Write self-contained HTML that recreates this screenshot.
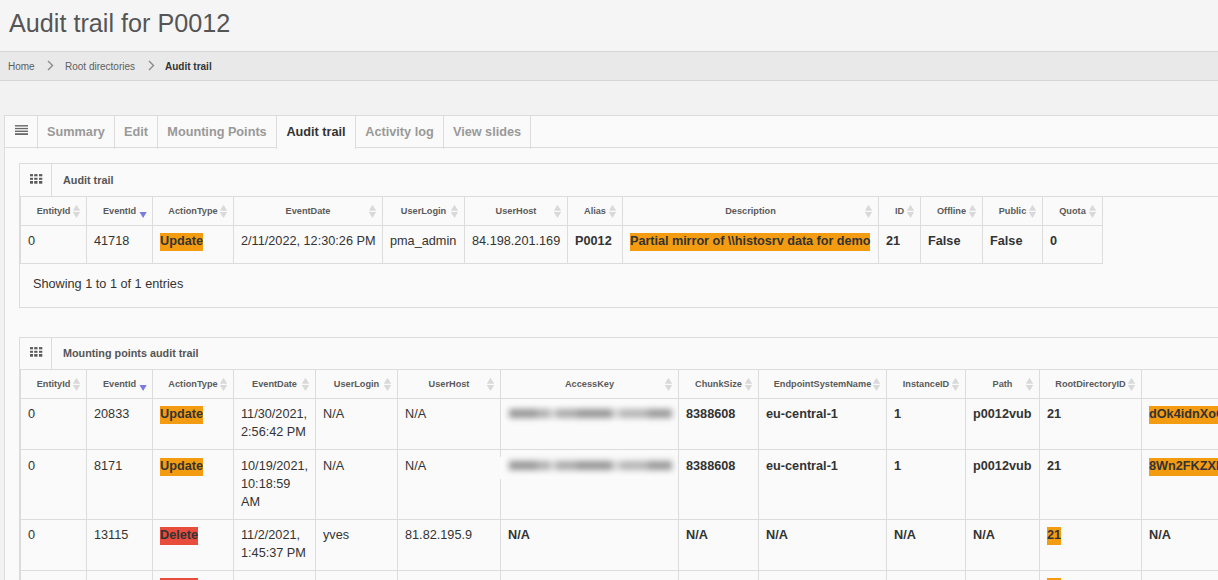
<!DOCTYPE html>
<html><head><meta charset="utf-8">
<style>
html,body{margin:0;padding:0;}
body{width:1218px;height:580px;overflow:hidden;position:relative;background:#f2f2f2;font-family:"Liberation Sans",sans-serif;color:#333;}
.hl{background:#f39c12;padding-top:1px;padding-bottom:3px;}
.hr{background:#e74c3c;padding-top:1px;padding-bottom:3px;}
</style></head><body>

<div style="position:absolute;left:0px;top:0px;width:1218px;height:51px;background:#f5f5f5"></div>
<div style="position:absolute;left:9px;top:8px;font-size:25.2px;font-weight:400;line-height:30px;color:#555;white-space:nowrap;">Audit trail for P0012</div>
<div style="position:absolute;left:0px;top:51px;width:1218px;height:30px;background:#e9e9e9;border-top:1px solid #d6d6d6;border-bottom:1px solid #d6d6d6;box-sizing:border-box"></div>
<div style="position:absolute;left:8px;top:61px;font-size:10px;font-weight:400;line-height:12px;color:#5e5e5e;white-space:nowrap;">Home</div>
<div style="position:absolute;left:65px;top:61px;font-size:10px;font-weight:400;line-height:12px;color:#5e5e5e;white-space:nowrap;">Root directories</div>
<div style="position:absolute;left:165px;top:61px;font-size:10px;font-weight:700;line-height:12px;color:#333;white-space:nowrap;">Audit trail</div>
<svg style="position:absolute;left:47px;top:60px" width="8" height="12" viewBox="0 0 8 12"><path d="M1 1 L5.5 5.5 L1 10" fill="none" stroke="#8a8a8a" stroke-width="1.4"/></svg>
<svg style="position:absolute;left:148px;top:60px" width="8" height="12" viewBox="0 0 8 12"><path d="M1 1 L5.5 5.5 L1 10" fill="none" stroke="#8a8a8a" stroke-width="1.4"/></svg>
<div style="position:absolute;left:4px;top:115px;width:1300px;height:600px;background:#fafafa;border:1px solid #dcdcdc;box-sizing:border-box"></div>
<div style="position:absolute;left:5px;top:147px;width:272px;height:1px;background:#dcdcdc"></div>
<div style="position:absolute;left:356px;top:147px;width:1000px;height:1px;background:#dcdcdc"></div>
<div style="position:absolute;left:37px;top:116px;width:1px;height:33px;background:#dcdcdc"></div>
<div style="position:absolute;left:114px;top:116px;width:1px;height:33px;background:#dcdcdc"></div>
<div style="position:absolute;left:157px;top:116px;width:1px;height:33px;background:#dcdcdc"></div>
<div style="position:absolute;left:276px;top:116px;width:1px;height:33px;background:#dcdcdc"></div>
<div style="position:absolute;left:355px;top:116px;width:1px;height:33px;background:#dcdcdc"></div>
<div style="position:absolute;left:443px;top:116px;width:1px;height:33px;background:#dcdcdc"></div>
<div style="position:absolute;left:530px;top:116px;width:1px;height:33px;background:#dcdcdc"></div>
<svg style="position:absolute;left:15px;top:124px" width="14" height="12" viewBox="0 0 14 12"><rect x="0" y="1.1" width="13" height="1.4" fill="#696969"/><rect x="0" y="3.9" width="13" height="1.3" fill="#696969"/><rect x="0" y="6.6" width="13" height="1.4" fill="#696969"/><rect x="0" y="9.2" width="13" height="1.8" fill="#696969"/></svg>
<div style="position:absolute;left:38px;top:123px;width:76px;text-align:center;font-size:12.7px;font-weight:700;line-height:18px;color:#999;white-space:nowrap">Summary</div>
<div style="position:absolute;left:115px;top:123px;width:42px;text-align:center;font-size:12.7px;font-weight:700;line-height:18px;color:#999;white-space:nowrap">Edit</div>
<div style="position:absolute;left:158px;top:123px;width:118px;text-align:center;font-size:12.7px;font-weight:700;line-height:18px;color:#999;white-space:nowrap">Mounting Points</div>
<div style="position:absolute;left:277px;top:123px;width:78px;text-align:center;font-size:12.7px;font-weight:700;line-height:18px;color:#333;white-space:nowrap">Audit trail</div>
<div style="position:absolute;left:356px;top:123px;width:87px;text-align:center;font-size:12.7px;font-weight:700;line-height:18px;color:#999;white-space:nowrap">Activity log</div>
<div style="position:absolute;left:444px;top:123px;width:86px;text-align:center;font-size:12.7px;font-weight:700;line-height:18px;color:#999;white-space:nowrap">View slides</div>
<div style="position:absolute;left:19px;top:163px;width:1300px;height:145px;background:#fafafa;border:1px solid #dcdcdc;box-sizing:border-box"></div>
<div style="position:absolute;left:20px;top:196px;width:1300px;height:1px;background:#dcdcdc"></div>
<div style="position:absolute;left:51px;top:164px;width:1px;height:32px;background:#dcdcdc"></div>
<svg style="position:absolute;left:30px;top:174px" width="14" height="11" viewBox="0 0 14 11"><rect x="-0.3" y="0.1" width="3.3" height="2.2" fill="#5a5a5a"/><rect x="4.2" y="0.1" width="3.3" height="2.2" fill="#5a5a5a"/><rect x="9.0" y="0.1" width="3.3" height="2.2" fill="#5a5a5a"/><rect x="-0.3" y="3.8" width="3.3" height="2.0" fill="#5a5a5a"/><rect x="4.2" y="3.8" width="3.3" height="2.0" fill="#5a5a5a"/><rect x="9.0" y="3.8" width="3.3" height="2.0" fill="#5a5a5a"/><rect x="-0.3" y="7.0" width="3.3" height="2.7" fill="#5a5a5a"/><rect x="4.2" y="7.0" width="3.3" height="2.7" fill="#5a5a5a"/><rect x="9.0" y="7.0" width="3.3" height="2.7" fill="#5a5a5a"/></svg>
<div style="position:absolute;left:63px;top:174px;font-size:10.8px;font-weight:700;line-height:13px;color:#555;white-space:nowrap;">Audit trail</div>
<div style="position:absolute;left:20px;top:196px;width:1px;height:68px;background:#dcdcdc"></div>
<div style="position:absolute;left:86px;top:196px;width:1px;height:68px;background:#dcdcdc"></div>
<div style="position:absolute;left:152px;top:196px;width:1px;height:68px;background:#dcdcdc"></div>
<div style="position:absolute;left:233px;top:196px;width:1px;height:68px;background:#dcdcdc"></div>
<div style="position:absolute;left:382px;top:196px;width:1px;height:68px;background:#dcdcdc"></div>
<div style="position:absolute;left:464px;top:196px;width:1px;height:68px;background:#dcdcdc"></div>
<div style="position:absolute;left:567px;top:196px;width:1px;height:68px;background:#dcdcdc"></div>
<div style="position:absolute;left:622px;top:196px;width:1px;height:68px;background:#dcdcdc"></div>
<div style="position:absolute;left:878px;top:196px;width:1px;height:68px;background:#dcdcdc"></div>
<div style="position:absolute;left:920px;top:196px;width:1px;height:68px;background:#dcdcdc"></div>
<div style="position:absolute;left:982px;top:196px;width:1px;height:68px;background:#dcdcdc"></div>
<div style="position:absolute;left:1042px;top:196px;width:1px;height:68px;background:#dcdcdc"></div>
<div style="position:absolute;left:1102px;top:196px;width:1px;height:68px;background:#dcdcdc"></div>
<div style="position:absolute;left:20px;top:196px;width:1083px;height:1px;background:#dcdcdc"></div>
<div style="position:absolute;left:20px;top:225px;width:1083px;height:1px;background:#dcdcdc"></div>
<div style="position:absolute;left:20px;top:263px;width:1083px;height:1px;background:#dcdcdc"></div>
<div style="position:absolute;left:21px;top:205px;width:65px;text-align:center;font-size:9.2px;font-weight:700;line-height:12px;color:#5a5a5a;white-space:nowrap">EntityId</div>
<svg style="position:absolute;left:73px;top:205px" width="8" height="14" viewBox="0 0 8 14"><path d="M3.5 -0.2 L7.2 5.7 L-0.2 5.7 Z" fill="#d9d9d9"/><path d="M-0.2 7.1 L7.2 7.1 L3.5 13 Z" fill="#d9d9d9"/></svg>
<div style="position:absolute;left:87px;top:205px;width:65px;text-align:center;font-size:9.2px;font-weight:700;line-height:12px;color:#5a5a5a;white-space:nowrap">EventId</div>
<svg style="position:absolute;left:139px;top:205px" width="8" height="14" viewBox="0 0 8 14"><path d="M0.5 6.9 L7.7 6.9 L4.1 13.1 Z" fill="#7a7adf"/></svg>
<div style="position:absolute;left:153px;top:205px;width:80px;text-align:center;font-size:9.2px;font-weight:700;line-height:12px;color:#5a5a5a;white-space:nowrap">ActionType</div>
<svg style="position:absolute;left:220px;top:205px" width="8" height="14" viewBox="0 0 8 14"><path d="M3.5 -0.2 L7.2 5.7 L-0.2 5.7 Z" fill="#d9d9d9"/><path d="M-0.2 7.1 L7.2 7.1 L3.5 13 Z" fill="#d9d9d9"/></svg>
<div style="position:absolute;left:234px;top:205px;width:148px;text-align:center;font-size:9.2px;font-weight:700;line-height:12px;color:#5a5a5a;white-space:nowrap">EventDate</div>
<svg style="position:absolute;left:369px;top:205px" width="8" height="14" viewBox="0 0 8 14"><path d="M3.5 -0.2 L7.2 5.7 L-0.2 5.7 Z" fill="#d9d9d9"/><path d="M-0.2 7.1 L7.2 7.1 L3.5 13 Z" fill="#d9d9d9"/></svg>
<div style="position:absolute;left:383px;top:205px;width:81px;text-align:center;font-size:9.2px;font-weight:700;line-height:12px;color:#5a5a5a;white-space:nowrap">UserLogin</div>
<svg style="position:absolute;left:451px;top:205px" width="8" height="14" viewBox="0 0 8 14"><path d="M3.5 -0.2 L7.2 5.7 L-0.2 5.7 Z" fill="#d9d9d9"/><path d="M-0.2 7.1 L7.2 7.1 L3.5 13 Z" fill="#d9d9d9"/></svg>
<div style="position:absolute;left:465px;top:205px;width:102px;text-align:center;font-size:9.2px;font-weight:700;line-height:12px;color:#5a5a5a;white-space:nowrap">UserHost</div>
<svg style="position:absolute;left:554px;top:205px" width="8" height="14" viewBox="0 0 8 14"><path d="M3.5 -0.2 L7.2 5.7 L-0.2 5.7 Z" fill="#d9d9d9"/><path d="M-0.2 7.1 L7.2 7.1 L3.5 13 Z" fill="#d9d9d9"/></svg>
<div style="position:absolute;left:568px;top:205px;width:54px;text-align:center;font-size:9.2px;font-weight:700;line-height:12px;color:#5a5a5a;white-space:nowrap">Alias</div>
<svg style="position:absolute;left:609px;top:205px" width="8" height="14" viewBox="0 0 8 14"><path d="M3.5 -0.2 L7.2 5.7 L-0.2 5.7 Z" fill="#d9d9d9"/><path d="M-0.2 7.1 L7.2 7.1 L3.5 13 Z" fill="#d9d9d9"/></svg>
<div style="position:absolute;left:623px;top:205px;width:255px;text-align:center;font-size:9.2px;font-weight:700;line-height:12px;color:#5a5a5a;white-space:nowrap">Description</div>
<svg style="position:absolute;left:865px;top:205px" width="8" height="14" viewBox="0 0 8 14"><path d="M3.5 -0.2 L7.2 5.7 L-0.2 5.7 Z" fill="#d9d9d9"/><path d="M-0.2 7.1 L7.2 7.1 L3.5 13 Z" fill="#d9d9d9"/></svg>
<div style="position:absolute;left:879px;top:205px;width:41px;text-align:center;font-size:9.2px;font-weight:700;line-height:12px;color:#5a5a5a;white-space:nowrap">ID</div>
<svg style="position:absolute;left:907px;top:205px" width="8" height="14" viewBox="0 0 8 14"><path d="M3.5 -0.2 L7.2 5.7 L-0.2 5.7 Z" fill="#d9d9d9"/><path d="M-0.2 7.1 L7.2 7.1 L3.5 13 Z" fill="#d9d9d9"/></svg>
<div style="position:absolute;left:921px;top:205px;width:61px;text-align:center;font-size:9.2px;font-weight:700;line-height:12px;color:#5a5a5a;white-space:nowrap">Offline</div>
<svg style="position:absolute;left:969px;top:205px" width="8" height="14" viewBox="0 0 8 14"><path d="M3.5 -0.2 L7.2 5.7 L-0.2 5.7 Z" fill="#d9d9d9"/><path d="M-0.2 7.1 L7.2 7.1 L3.5 13 Z" fill="#d9d9d9"/></svg>
<div style="position:absolute;left:983px;top:205px;width:59px;text-align:center;font-size:9.2px;font-weight:700;line-height:12px;color:#5a5a5a;white-space:nowrap">Public</div>
<svg style="position:absolute;left:1029px;top:205px" width="8" height="14" viewBox="0 0 8 14"><path d="M3.5 -0.2 L7.2 5.7 L-0.2 5.7 Z" fill="#d9d9d9"/><path d="M-0.2 7.1 L7.2 7.1 L3.5 13 Z" fill="#d9d9d9"/></svg>
<div style="position:absolute;left:1043px;top:205px;width:59px;text-align:center;font-size:9.2px;font-weight:700;line-height:12px;color:#5a5a5a;white-space:nowrap">Quota</div>
<svg style="position:absolute;left:1089px;top:205px" width="8" height="14" viewBox="0 0 8 14"><path d="M3.5 -0.2 L7.2 5.7 L-0.2 5.7 Z" fill="#d9d9d9"/><path d="M-0.2 7.1 L7.2 7.1 L3.5 13 Z" fill="#d9d9d9"/></svg>
<div style="position:absolute;left:28px;top:232px;font-size:12.7px;font-weight:400;line-height:18px;color:#333;white-space:nowrap;">0</div>
<div style="position:absolute;left:94px;top:232px;font-size:12.7px;font-weight:400;line-height:18px;color:#333;white-space:nowrap;">41718</div>
<div style="position:absolute;left:160px;top:232px;font-size:12.7px;font-weight:700;line-height:18px;color:#333;white-space:nowrap;"><span class="hl">Update</span></div>
<div style="position:absolute;left:241px;top:232px;font-size:12.7px;font-weight:400;line-height:18px;color:#333;white-space:nowrap;">2/11/2022, 12:30:26 PM</div>
<div style="position:absolute;left:390px;top:232px;font-size:12.7px;font-weight:400;line-height:18px;color:#333;white-space:nowrap;">pma_admin</div>
<div style="position:absolute;left:472px;top:232px;font-size:12.7px;font-weight:400;line-height:18px;color:#333;white-space:nowrap;">84.198.201.169</div>
<div style="position:absolute;left:575px;top:232px;font-size:12.7px;font-weight:700;line-height:18px;color:#333;white-space:nowrap;">P0012</div>
<div style="position:absolute;left:630px;top:232px;font-size:12.7px;font-weight:700;line-height:18px;color:#333;white-space:nowrap;"><span class="hl"><span style="letter-spacing:-0.05px">Partial mirror of \\histosrv data for demo</span></span></div>
<div style="position:absolute;left:886px;top:232px;font-size:12.7px;font-weight:700;line-height:18px;color:#333;white-space:nowrap;">21</div>
<div style="position:absolute;left:928px;top:232px;font-size:12.7px;font-weight:700;line-height:18px;color:#333;white-space:nowrap;">False</div>
<div style="position:absolute;left:990px;top:232px;font-size:12.7px;font-weight:700;line-height:18px;color:#333;white-space:nowrap;">False</div>
<div style="position:absolute;left:1050px;top:232px;font-size:12.7px;font-weight:700;line-height:18px;color:#333;white-space:nowrap;">0</div>
<div style="position:absolute;left:33px;top:275px;font-size:12.7px;font-weight:400;line-height:18px;color:#333;white-space:nowrap;">Showing 1 to 1 of 1 entries</div>
<div style="position:absolute;left:19px;top:337px;width:1300px;height:700px;background:#fafafa;border:1px solid #dcdcdc;box-sizing:border-box"></div>
<div style="position:absolute;left:20px;top:369px;width:1300px;height:1px;background:#dcdcdc"></div>
<div style="position:absolute;left:51px;top:338px;width:1px;height:31px;background:#dcdcdc"></div>
<svg style="position:absolute;left:30px;top:347px" width="14" height="11" viewBox="0 0 14 11"><rect x="-0.3" y="0.1" width="3.3" height="2.2" fill="#5a5a5a"/><rect x="4.2" y="0.1" width="3.3" height="2.2" fill="#5a5a5a"/><rect x="9.0" y="0.1" width="3.3" height="2.2" fill="#5a5a5a"/><rect x="-0.3" y="3.8" width="3.3" height="2.0" fill="#5a5a5a"/><rect x="4.2" y="3.8" width="3.3" height="2.0" fill="#5a5a5a"/><rect x="9.0" y="3.8" width="3.3" height="2.0" fill="#5a5a5a"/><rect x="-0.3" y="7.0" width="3.3" height="2.7" fill="#5a5a5a"/><rect x="4.2" y="7.0" width="3.3" height="2.7" fill="#5a5a5a"/><rect x="9.0" y="7.0" width="3.3" height="2.7" fill="#5a5a5a"/></svg>
<div style="position:absolute;left:63px;top:347px;font-size:10.8px;font-weight:700;line-height:13px;color:#555;white-space:nowrap;">Mounting points audit trail</div>
<div style="position:absolute;left:20px;top:369px;width:1px;height:272px;background:#dcdcdc"></div>
<div style="position:absolute;left:86px;top:369px;width:1px;height:272px;background:#dcdcdc"></div>
<div style="position:absolute;left:152px;top:369px;width:1px;height:272px;background:#dcdcdc"></div>
<div style="position:absolute;left:233px;top:369px;width:1px;height:272px;background:#dcdcdc"></div>
<div style="position:absolute;left:315px;top:369px;width:1px;height:272px;background:#dcdcdc"></div>
<div style="position:absolute;left:397px;top:369px;width:1px;height:272px;background:#dcdcdc"></div>
<div style="position:absolute;left:500px;top:369px;width:1px;height:272px;background:#dcdcdc"></div>
<div style="position:absolute;left:678px;top:369px;width:1px;height:272px;background:#dcdcdc"></div>
<div style="position:absolute;left:758px;top:369px;width:1px;height:272px;background:#dcdcdc"></div>
<div style="position:absolute;left:886px;top:369px;width:1px;height:272px;background:#dcdcdc"></div>
<div style="position:absolute;left:965px;top:369px;width:1px;height:272px;background:#dcdcdc"></div>
<div style="position:absolute;left:1039px;top:369px;width:1px;height:272px;background:#dcdcdc"></div>
<div style="position:absolute;left:1141px;top:369px;width:1px;height:272px;background:#dcdcdc"></div>
<div style="position:absolute;left:1400px;top:369px;width:1px;height:272px;background:#dcdcdc"></div>
<div style="position:absolute;left:20px;top:369px;width:1280px;height:1px;background:#dcdcdc"></div>
<div style="position:absolute;left:20px;top:398px;width:1280px;height:1px;background:#dcdcdc"></div>
<div style="position:absolute;left:20px;top:449px;width:1280px;height:1px;background:#dcdcdc"></div>
<div style="position:absolute;left:20px;top:519px;width:1280px;height:1px;background:#dcdcdc"></div>
<div style="position:absolute;left:20px;top:570px;width:1280px;height:1px;background:#dcdcdc"></div>
<div style="position:absolute;left:20px;top:640px;width:1280px;height:1px;background:#dcdcdc"></div>
<div style="position:absolute;left:21px;top:378px;width:65px;text-align:center;font-size:9.2px;font-weight:700;line-height:12px;color:#5a5a5a;white-space:nowrap">EntityId</div>
<svg style="position:absolute;left:73px;top:378px" width="8" height="14" viewBox="0 0 8 14"><path d="M3.5 -0.2 L7.2 5.7 L-0.2 5.7 Z" fill="#d9d9d9"/><path d="M-0.2 7.1 L7.2 7.1 L3.5 13 Z" fill="#d9d9d9"/></svg>
<div style="position:absolute;left:87px;top:378px;width:65px;text-align:center;font-size:9.2px;font-weight:700;line-height:12px;color:#5a5a5a;white-space:nowrap">EventId</div>
<svg style="position:absolute;left:139px;top:378px" width="8" height="14" viewBox="0 0 8 14"><path d="M0.5 6.9 L7.7 6.9 L4.1 13.1 Z" fill="#7a7adf"/></svg>
<div style="position:absolute;left:153px;top:378px;width:80px;text-align:center;font-size:9.2px;font-weight:700;line-height:12px;color:#5a5a5a;white-space:nowrap">ActionType</div>
<svg style="position:absolute;left:220px;top:378px" width="8" height="14" viewBox="0 0 8 14"><path d="M3.5 -0.2 L7.2 5.7 L-0.2 5.7 Z" fill="#d9d9d9"/><path d="M-0.2 7.1 L7.2 7.1 L3.5 13 Z" fill="#d9d9d9"/></svg>
<div style="position:absolute;left:234px;top:378px;width:81px;text-align:center;font-size:9.2px;font-weight:700;line-height:12px;color:#5a5a5a;white-space:nowrap">EventDate</div>
<svg style="position:absolute;left:302px;top:378px" width="8" height="14" viewBox="0 0 8 14"><path d="M3.5 -0.2 L7.2 5.7 L-0.2 5.7 Z" fill="#d9d9d9"/><path d="M-0.2 7.1 L7.2 7.1 L3.5 13 Z" fill="#d9d9d9"/></svg>
<div style="position:absolute;left:316px;top:378px;width:81px;text-align:center;font-size:9.2px;font-weight:700;line-height:12px;color:#5a5a5a;white-space:nowrap">UserLogin</div>
<svg style="position:absolute;left:384px;top:378px" width="8" height="14" viewBox="0 0 8 14"><path d="M3.5 -0.2 L7.2 5.7 L-0.2 5.7 Z" fill="#d9d9d9"/><path d="M-0.2 7.1 L7.2 7.1 L3.5 13 Z" fill="#d9d9d9"/></svg>
<div style="position:absolute;left:398px;top:378px;width:102px;text-align:center;font-size:9.2px;font-weight:700;line-height:12px;color:#5a5a5a;white-space:nowrap">UserHost</div>
<svg style="position:absolute;left:487px;top:378px" width="8" height="14" viewBox="0 0 8 14"><path d="M3.5 -0.2 L7.2 5.7 L-0.2 5.7 Z" fill="#d9d9d9"/><path d="M-0.2 7.1 L7.2 7.1 L3.5 13 Z" fill="#d9d9d9"/></svg>
<div style="position:absolute;left:501px;top:378px;width:177px;text-align:center;font-size:9.2px;font-weight:700;line-height:12px;color:#5a5a5a;white-space:nowrap">AccessKey</div>
<svg style="position:absolute;left:665px;top:378px" width="8" height="14" viewBox="0 0 8 14"><path d="M3.5 -0.2 L7.2 5.7 L-0.2 5.7 Z" fill="#d9d9d9"/><path d="M-0.2 7.1 L7.2 7.1 L3.5 13 Z" fill="#d9d9d9"/></svg>
<div style="position:absolute;left:679px;top:378px;width:79px;text-align:center;font-size:9.2px;font-weight:700;line-height:12px;color:#5a5a5a;white-space:nowrap">ChunkSize</div>
<svg style="position:absolute;left:745px;top:378px" width="8" height="14" viewBox="0 0 8 14"><path d="M3.5 -0.2 L7.2 5.7 L-0.2 5.7 Z" fill="#d9d9d9"/><path d="M-0.2 7.1 L7.2 7.1 L3.5 13 Z" fill="#d9d9d9"/></svg>
<div style="position:absolute;left:759px;top:378px;width:127px;text-align:center;font-size:9.2px;font-weight:700;line-height:12px;color:#5a5a5a;white-space:nowrap">EndpointSystemName</div>
<svg style="position:absolute;left:873px;top:378px" width="8" height="14" viewBox="0 0 8 14"><path d="M3.5 -0.2 L7.2 5.7 L-0.2 5.7 Z" fill="#d9d9d9"/><path d="M-0.2 7.1 L7.2 7.1 L3.5 13 Z" fill="#d9d9d9"/></svg>
<div style="position:absolute;left:887px;top:378px;width:78px;text-align:center;font-size:9.2px;font-weight:700;line-height:12px;color:#5a5a5a;white-space:nowrap">InstanceID</div>
<svg style="position:absolute;left:952px;top:378px" width="8" height="14" viewBox="0 0 8 14"><path d="M3.5 -0.2 L7.2 5.7 L-0.2 5.7 Z" fill="#d9d9d9"/><path d="M-0.2 7.1 L7.2 7.1 L3.5 13 Z" fill="#d9d9d9"/></svg>
<div style="position:absolute;left:966px;top:378px;width:73px;text-align:center;font-size:9.2px;font-weight:700;line-height:12px;color:#5a5a5a;white-space:nowrap">Path</div>
<svg style="position:absolute;left:1026px;top:378px" width="8" height="14" viewBox="0 0 8 14"><path d="M3.5 -0.2 L7.2 5.7 L-0.2 5.7 Z" fill="#d9d9d9"/><path d="M-0.2 7.1 L7.2 7.1 L3.5 13 Z" fill="#d9d9d9"/></svg>
<div style="position:absolute;left:1040px;top:378px;width:101px;text-align:center;font-size:9.2px;font-weight:700;line-height:12px;color:#5a5a5a;white-space:nowrap">RootDirectoryID</div>
<svg style="position:absolute;left:1128px;top:378px" width="8" height="14" viewBox="0 0 8 14"><path d="M3.5 -0.2 L7.2 5.7 L-0.2 5.7 Z" fill="#d9d9d9"/><path d="M-0.2 7.1 L7.2 7.1 L3.5 13 Z" fill="#d9d9d9"/></svg>
<div style="position:absolute;left:1142px;top:378px;width:258px;text-align:center;font-size:9.2px;font-weight:700;line-height:12px;color:#5a5a5a;white-space:nowrap"></div>
<svg style="position:absolute;left:1387px;top:378px" width="8" height="14" viewBox="0 0 8 14"><path d="M3.5 -0.2 L7.2 5.7 L-0.2 5.7 Z" fill="#d9d9d9"/><path d="M-0.2 7.1 L7.2 7.1 L3.5 13 Z" fill="#d9d9d9"/></svg>
<div style="position:absolute;left:28px;top:405px;font-size:12.7px;font-weight:400;line-height:18px;color:#333;white-space:nowrap;">0</div>
<div style="position:absolute;left:94px;top:405px;font-size:12.7px;font-weight:400;line-height:18px;color:#333;white-space:nowrap;">20833</div>
<div style="position:absolute;left:160px;top:405px;font-size:12.7px;font-weight:700;line-height:18px;color:#333;white-space:nowrap;"><span class="hl">Update</span></div>
<div style="position:absolute;left:241px;top:405px;font-size:12.7px;font-weight:400;line-height:18px;color:#333;white-space:nowrap;">11/30/2021,</div>
<div style="position:absolute;left:241px;top:423px;font-size:12.7px;font-weight:400;line-height:18px;color:#333;white-space:nowrap;">2:56:42 PM</div>
<div style="position:absolute;left:323px;top:405px;font-size:12.7px;font-weight:400;line-height:18px;color:#333;white-space:nowrap;">N/A</div>
<div style="position:absolute;left:405px;top:405px;font-size:12.7px;font-weight:400;line-height:18px;color:#333;white-space:nowrap;">N/A</div>
<div style="position:absolute;left:503px;top:402px;width:172px;height:22px;background:#fcfcfc;filter:blur(1px)"></div>
<div style="position:absolute;left:503px;top:403px;width:175px;height:19px;filter:blur(3.2px)"><div style="position:absolute;left:6px;top:6px;width:28px;height:9px;background:#949494"></div><div style="position:absolute;left:34px;top:6px;width:13px;height:9px;background:#adadad"></div><div style="position:absolute;left:47px;top:6px;width:6px;height:9px;background:#d8d8d8"></div><div style="position:absolute;left:53px;top:6px;width:21px;height:9px;background:#a8a8a8"></div><div style="position:absolute;left:74px;top:6px;width:35px;height:9px;background:#939393"></div><div style="position:absolute;left:109px;top:6px;width:8px;height:9px;background:#d5d5d5"></div><div style="position:absolute;left:117px;top:6px;width:28px;height:9px;background:#b3b3b3"></div><div style="position:absolute;left:145px;top:6px;width:24px;height:9px;background:#979797"></div></div>
<div style="position:absolute;left:686px;top:405px;font-size:12.7px;font-weight:700;line-height:18px;color:#333;white-space:nowrap;">8388608</div>
<div style="position:absolute;left:766px;top:405px;font-size:12.7px;font-weight:700;line-height:18px;color:#333;white-space:nowrap;">eu-central-1</div>
<div style="position:absolute;left:894px;top:405px;font-size:12.7px;font-weight:700;line-height:18px;color:#333;white-space:nowrap;">1</div>
<div style="position:absolute;left:973px;top:405px;font-size:12.7px;font-weight:700;line-height:18px;color:#333;white-space:nowrap;">p0012vub</div>
<div style="position:absolute;left:1047px;top:405px;font-size:12.7px;font-weight:700;line-height:18px;color:#333;white-space:nowrap;">21</div>
<div style="position:absolute;left:1149px;top:405px;font-size:12.7px;font-weight:700;line-height:18px;color:#333;white-space:nowrap;"><span class="hl">dOk4idnXoCqZ</span></div>
<div style="position:absolute;left:28px;top:457px;font-size:12.7px;font-weight:400;line-height:18px;color:#333;white-space:nowrap;">0</div>
<div style="position:absolute;left:94px;top:457px;font-size:12.7px;font-weight:400;line-height:18px;color:#333;white-space:nowrap;">8171</div>
<div style="position:absolute;left:160px;top:457px;font-size:12.7px;font-weight:700;line-height:18px;color:#333;white-space:nowrap;"><span class="hl">Update</span></div>
<div style="position:absolute;left:241px;top:457px;font-size:12.7px;font-weight:400;line-height:18px;color:#333;white-space:nowrap;">10/19/2021,</div>
<div style="position:absolute;left:241px;top:475px;font-size:12.7px;font-weight:400;line-height:18px;color:#333;white-space:nowrap;">10:18:59</div>
<div style="position:absolute;left:241px;top:493px;font-size:12.7px;font-weight:400;line-height:18px;color:#333;white-space:nowrap;">AM</div>
<div style="position:absolute;left:323px;top:457px;font-size:12.7px;font-weight:400;line-height:18px;color:#333;white-space:nowrap;">N/A</div>
<div style="position:absolute;left:405px;top:457px;font-size:12.7px;font-weight:400;line-height:18px;color:#333;white-space:nowrap;">N/A</div>
<div style="position:absolute;left:500px;top:457px;width:172px;height:22px;background:#fbfbfb"></div>
<div style="position:absolute;left:503px;top:455px;width:175px;height:19px;filter:blur(3.2px)"><div style="position:absolute;left:6px;top:6px;width:28px;height:9px;background:#949494"></div><div style="position:absolute;left:34px;top:6px;width:13px;height:9px;background:#adadad"></div><div style="position:absolute;left:47px;top:6px;width:6px;height:9px;background:#d8d8d8"></div><div style="position:absolute;left:53px;top:6px;width:21px;height:9px;background:#a8a8a8"></div><div style="position:absolute;left:74px;top:6px;width:35px;height:9px;background:#939393"></div><div style="position:absolute;left:109px;top:6px;width:8px;height:9px;background:#d5d5d5"></div><div style="position:absolute;left:117px;top:6px;width:28px;height:9px;background:#b3b3b3"></div><div style="position:absolute;left:145px;top:6px;width:24px;height:9px;background:#979797"></div></div>
<div style="position:absolute;left:686px;top:457px;font-size:12.7px;font-weight:700;line-height:18px;color:#333;white-space:nowrap;">8388608</div>
<div style="position:absolute;left:766px;top:457px;font-size:12.7px;font-weight:700;line-height:18px;color:#333;white-space:nowrap;">eu-central-1</div>
<div style="position:absolute;left:894px;top:457px;font-size:12.7px;font-weight:700;line-height:18px;color:#333;white-space:nowrap;">1</div>
<div style="position:absolute;left:973px;top:457px;font-size:12.7px;font-weight:700;line-height:18px;color:#333;white-space:nowrap;">p0012vub</div>
<div style="position:absolute;left:1047px;top:457px;font-size:12.7px;font-weight:700;line-height:18px;color:#333;white-space:nowrap;">21</div>
<div style="position:absolute;left:1149px;top:457px;font-size:12.7px;font-weight:700;line-height:18px;color:#333;white-space:nowrap;"><span class="hl">8Wn2FKZXIrQ</span></div>
<div style="position:absolute;left:28px;top:526px;font-size:12.7px;font-weight:400;line-height:18px;color:#333;white-space:nowrap;">0</div>
<div style="position:absolute;left:94px;top:526px;font-size:12.7px;font-weight:400;line-height:18px;color:#333;white-space:nowrap;">13115</div>
<div style="position:absolute;left:160px;top:526px;font-size:12.7px;font-weight:700;line-height:18px;color:#333;white-space:nowrap;"><span class="hr">Delete</span></div>
<div style="position:absolute;left:241px;top:526px;font-size:12.7px;font-weight:400;line-height:18px;color:#333;white-space:nowrap;">11/2/2021,</div>
<div style="position:absolute;left:241px;top:544px;font-size:12.7px;font-weight:400;line-height:18px;color:#333;white-space:nowrap;">1:45:37 PM</div>
<div style="position:absolute;left:323px;top:526px;font-size:12.7px;font-weight:400;line-height:18px;color:#333;white-space:nowrap;">yves</div>
<div style="position:absolute;left:405px;top:526px;font-size:12.7px;font-weight:400;line-height:18px;color:#333;white-space:nowrap;">81.82.195.9</div>
<div style="position:absolute;left:508px;top:526px;font-size:12.7px;font-weight:700;line-height:18px;color:#333;white-space:nowrap;">N/A</div>
<div style="position:absolute;left:686px;top:526px;font-size:12.7px;font-weight:700;line-height:18px;color:#333;white-space:nowrap;">N/A</div>
<div style="position:absolute;left:766px;top:526px;font-size:12.7px;font-weight:700;line-height:18px;color:#333;white-space:nowrap;">N/A</div>
<div style="position:absolute;left:894px;top:526px;font-size:12.7px;font-weight:700;line-height:18px;color:#333;white-space:nowrap;">N/A</div>
<div style="position:absolute;left:973px;top:526px;font-size:12.7px;font-weight:700;line-height:18px;color:#333;white-space:nowrap;">N/A</div>
<div style="position:absolute;left:1047px;top:526px;font-size:12.7px;font-weight:700;line-height:18px;color:#333;white-space:nowrap;"><span class="hl">21</span></div>
<div style="position:absolute;left:1149px;top:526px;font-size:12.7px;font-weight:700;line-height:18px;color:#333;white-space:nowrap;">N/A</div>
<div style="position:absolute;left:28px;top:577px;font-size:12.7px;font-weight:400;line-height:18px;color:#333;white-space:nowrap;">0</div>
<div style="position:absolute;left:94px;top:577px;font-size:12.7px;font-weight:400;line-height:18px;color:#333;white-space:nowrap;">12004</div>
<div style="position:absolute;left:160px;top:577px;font-size:12.7px;font-weight:700;line-height:18px;color:#333;white-space:nowrap;"><span class="hr">Delete</span></div>
<div style="position:absolute;left:241px;top:577px;font-size:12.7px;font-weight:400;line-height:18px;color:#333;white-space:nowrap;">11/2/2021,</div>
<div style="position:absolute;left:241px;top:595px;font-size:12.7px;font-weight:400;line-height:18px;color:#333;white-space:nowrap;">1:45:37 PM</div>
<div style="position:absolute;left:323px;top:577px;font-size:12.7px;font-weight:400;line-height:18px;color:#333;white-space:nowrap;">yves</div>
<div style="position:absolute;left:405px;top:577px;font-size:12.7px;font-weight:400;line-height:18px;color:#333;white-space:nowrap;">81.82.195.9</div>
<div style="position:absolute;left:508px;top:577px;font-size:12.7px;font-weight:700;line-height:18px;color:#333;white-space:nowrap;">N/A</div>
<div style="position:absolute;left:686px;top:577px;font-size:12.7px;font-weight:700;line-height:18px;color:#333;white-space:nowrap;">N/A</div>
<div style="position:absolute;left:766px;top:577px;font-size:12.7px;font-weight:700;line-height:18px;color:#333;white-space:nowrap;">N/A</div>
<div style="position:absolute;left:894px;top:577px;font-size:12.7px;font-weight:700;line-height:18px;color:#333;white-space:nowrap;">N/A</div>
<div style="position:absolute;left:973px;top:577px;font-size:12.7px;font-weight:700;line-height:18px;color:#333;white-space:nowrap;">N/A</div>
<div style="position:absolute;left:1047px;top:577px;font-size:12.7px;font-weight:700;line-height:18px;color:#333;white-space:nowrap;"><span class="hl">21</span></div>
<div style="position:absolute;left:1149px;top:577px;font-size:12.7px;font-weight:700;line-height:18px;color:#333;white-space:nowrap;">N/A</div>
</body></html>
